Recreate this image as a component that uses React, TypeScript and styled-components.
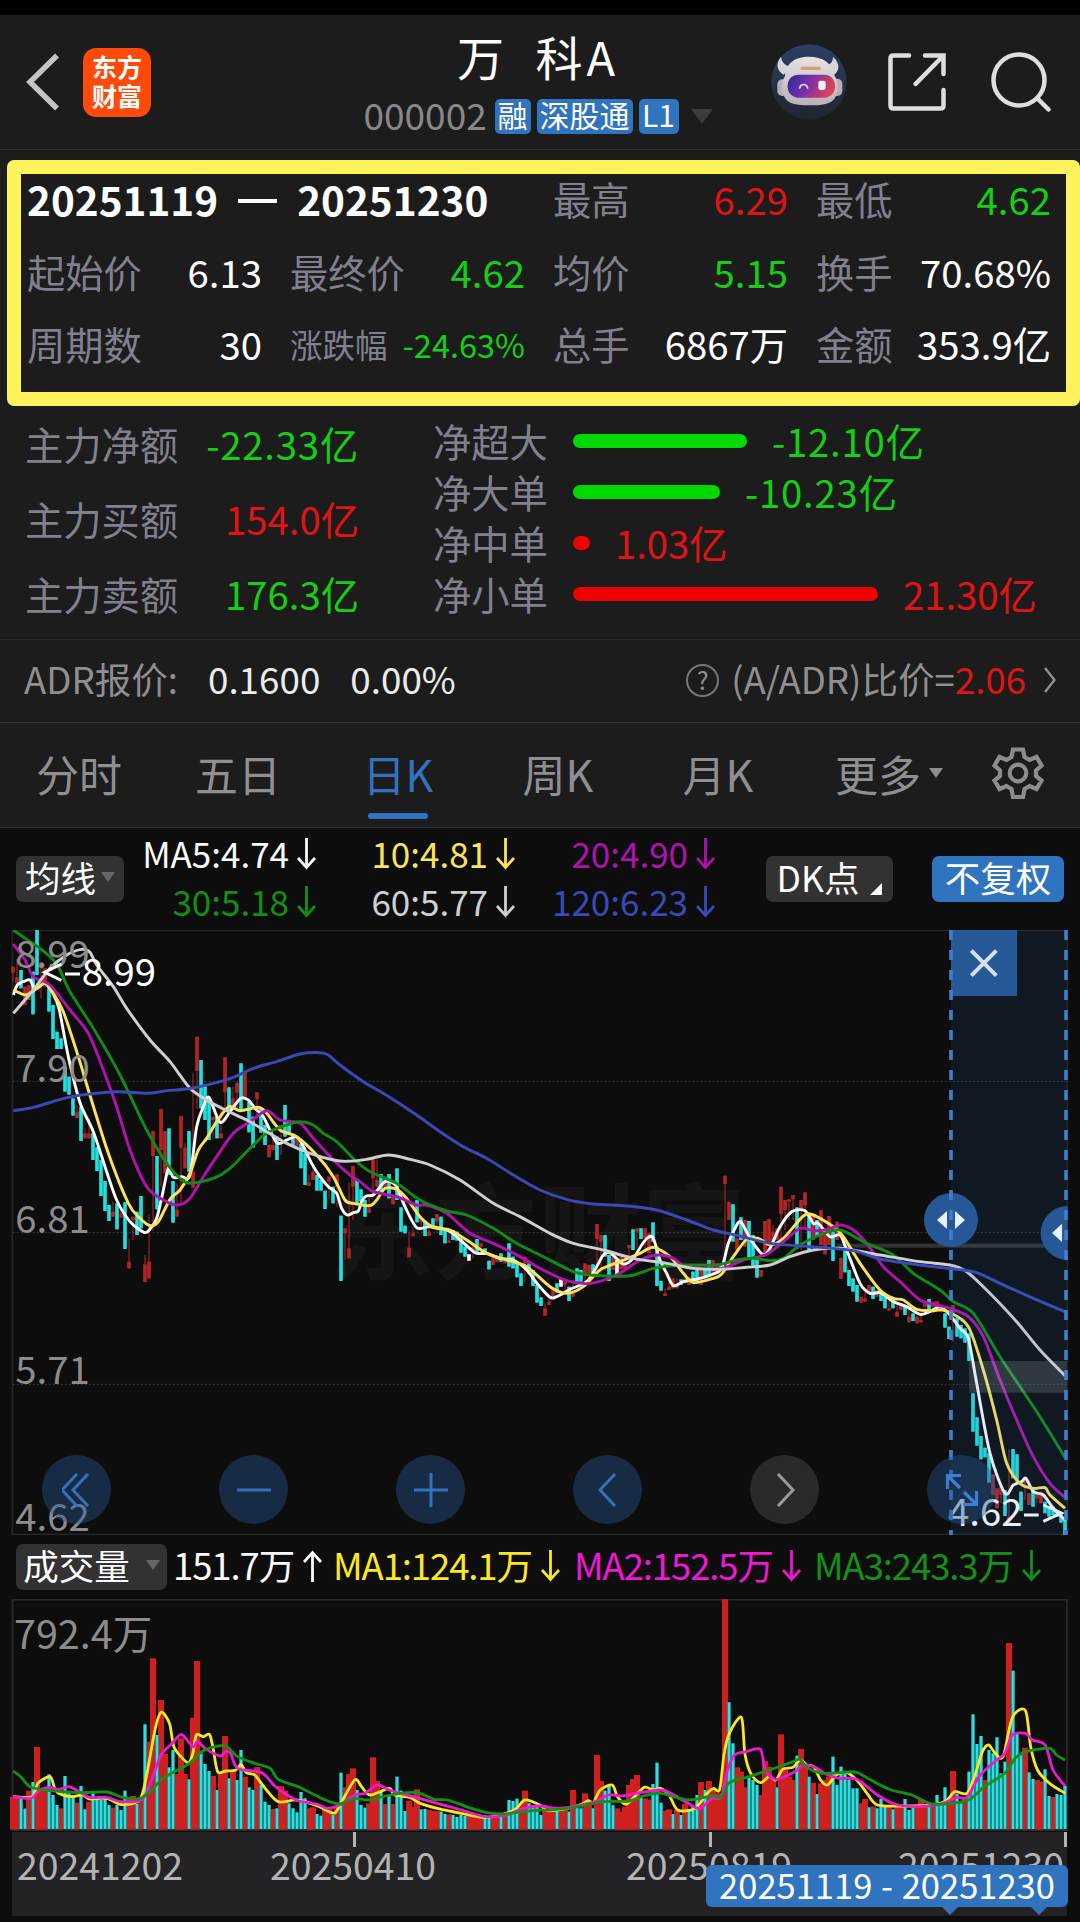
import styled, { createGlobalStyle } from 'styled-components';

const FONT = "'Noto Sans CJK SC', 'Noto Sans', sans-serif";

const COLORS = {
  up: '#e01414',
  down: '#14cf14',
  white: '#fdfdfd',
  muted: '#8f8f91',
  blue: '#3073be',
};

const GlobalStyle = createGlobalStyle`
  * {
    box-sizing: border-box;
  }

  body {
    margin: 0;
    background: #0d0d0d;
    font-family: ${FONT};
    color: ${COLORS.white};
  }

  svg {
    display: block;
    flex: none;
  }
`;

type Tone = 'up' | 'down' | 'white';

const Screen = styled.div`
  width: 1080px;
  height: 1922px;
  overflow: hidden;
  background: #0d0d0d;
  white-space: nowrap;
`;

/* header */

const StatusStrip = styled.div`
  height: 15px;
  background: #000;
`;

const Header = styled.header`
  display: grid;
  grid-template-columns: 364px 348px 1fr;
  height: 135px;
  background: #1c1c1c;
  border-bottom: 1px solid #333;
`;

const HeaderLeft = styled.div`
  display: flex;
  align-items: center;
  gap: 23px;
  padding: 0 0 0 26px;
`;

const BrandLogo = styled.div`
  display: flex;
  flex-direction: column;
  align-items: center;
  justify-content: center;
  width: 68px;
  height: 69px;
  padding-bottom: 2px;
  border-radius: 13px;
  background: #ff4a08;
  font-size: 25px;
  font-weight: 700;
  line-height: 29px;
`;

const HeaderCenter = styled.div`
  display: flex;
  flex-direction: column;
  align-items: center;
`;

const StockName = styled.h1`
  margin: 14px 0 0;
  font-size: 47px;
  font-weight: 400;
  line-height: 54px;
  letter-spacing: 4px;
  word-spacing: 13px;
`;

const StockMeta = styled.div`
  display: flex;
  align-items: center;
  gap: 6px;
  margin-top: 15px;
  height: 36px;
`;

const StockCode = styled.span`
  width: 125px;
  padding-bottom: 4px;
  font-size: 37px;
  color: #88888a;
`;

const Tag = styled.span<{ $width: number }>`
  width: ${({ $width }) => $width}px;
  height: 35px;
  border-radius: 5px;
  background: ${COLORS.blue};
  font-size: 30px;
  line-height: 31px;
  text-align: center;
`;

const Caret = styled.i<{ $size: number; $color: string }>`
  flex: none;
  border: ${({ $size }) => $size}px solid transparent;
  border-top: ${({ $size }) => $size * 1.45}px solid ${({ $color }) => $color};
  border-bottom: 0;
`;

const HeaderRight = styled.div`
  display: flex;
  align-items: center;
  justify-content: flex-end;
  padding-right: 29px;
`;

/* period statistics */

const PeriodPanel = styled.section`
  padding: 10px 0 0 7px;
  background: #1c1c1c;
`;

const PeriodFrame = styled.div`
  display: grid;
  grid-template-columns: repeat(4, 235px);
  grid-template-rows: repeat(3, 49px);
  gap: 23.5px 28px;
  height: 246px;
  padding-left: 6px;
  border: 14px solid #fff35c;
  border-radius: 7px;
`;

const PeriodRange = styled.div`
  display: flex;
  align-items: center;
  grid-column: span 2;
  font-size: 40.5px;
  font-weight: 700;
`;

const RangeDash = styled.i`
  width: 39px;
  height: 4px;
  margin: 4px 20px 0;
  background: #fff;
`;

const Cell = styled.div<{ $small?: boolean }>`
  display: flex;
  align-items: center;
  justify-content: space-between;
  font-size: ${({ $small }) => ($small ? 32.5 : 38.3)}px;
`;

const Label = styled.span`
  color: #81808f;
`;

const Value = styled.span<{ $tone: Tone; $loose?: boolean }>`
  color: ${({ $tone }) => COLORS[$tone]};
  letter-spacing: ${({ $loose }) => ($loose ? '0.8px' : 'normal')};
`;

/* money flow */

const FlowPanel = styled.section`
  display: grid;
  grid-template-columns: 334px 1fr;
  column-gap: 74px;
  height: 234px;
  padding-left: 25px;
  background: #1c1c1c;
  border-bottom: 1px solid #292929;
`;

const FlowTotals = styled.div`
  display: grid;
  grid-template-rows: repeat(3, 75px);
`;

const FlowDetails = styled.div`
  display: grid;
  grid-template-rows: repeat(4, 51px);
  padding-top: 9px;
`;

const FlowRow = styled.div`
  display: flex;
  align-items: center;
  font-size: 38.3px;
`;

const FlowBar = styled.i<{ $tone: Tone }>`
  height: 14px;
  margin: 1px 25px 0 25px;
  border-radius: 7px;
  background: ${({ $tone }) => ($tone === 'up' ? '#f00000' : '#00d900')};
`;

/* adr */

const AdrRow = styled.section`
  display: flex;
  align-items: center;
  height: 83px;
  padding: 0 24px 6px 24px;
  background: #1c1c1c;
  border-bottom: 1px solid #343434;
  font-size: 36.6px;
  color: ${COLORS.muted};
`;

const AdrValue = styled.span`
  margin-left: 30px;
  font-size: 36.8px;
  color: #ececec;
`;

const AdrRatio = styled.div`
  display: flex;
  align-items: center;
  margin-left: auto;
`;

const HelpMark = styled.span`
  width: 33px;
  height: 33px;
  margin: 4px 12px 0 0;
  border: 2.5px solid #777;
  border-radius: 50%;
  font-size: 25px;
  line-height: 27px;
  text-align: center;
`;

/* tabs */

const Tabs = styled.nav`
  display: grid;
  grid-template-columns: 158px repeat(4, 160px) 182px 76px;
  height: 105px;
  background: #1c1c1c;
  border-bottom: 1px solid #333;
`;

const Tab = styled.div<{ $active?: boolean }>`
  position: relative;
  display: flex;
  align-items: center;
  justify-content: center;
  gap: 8px;
  padding-bottom: 4px;
  font-size: 43px;
  color: ${({ $active }) => ($active ? COLORS.blue : COLORS.muted)};

  &::after {
    content: '';
    position: absolute;
    bottom: 8px;
    width: 60px;
    height: 6px;
    border-radius: 3px;
    background: ${({ $active }) => ($active ? COLORS.blue : 'transparent')};
  }
`;

/* indicators */

const IndicatorBar = styled.div`
  display: flex;
  align-items: center;
  height: 102px;
  padding: 0 16px 0 16px;
`;

const Chip = styled.div<{ $width: number; $primary?: boolean }>`
  display: flex;
  align-items: center;
  justify-content: center;
  gap: 5px;
  width: ${({ $width }) => $width}px;
  height: 46px;
  padding-bottom: 4px;
  border-radius: 7px;
  background: ${({ $primary }) => ($primary ? COLORS.blue : '#323232')};
  font-size: 35.5px;
  line-height: 42px;
`;

const Corner = styled.i`
  align-self: flex-end;
  margin: 0 0 3px 6px;
  border: 6px solid #fff;
  border-top-color: transparent;
  border-left-color: transparent;
`;

const Averages = styled.div`
  display: grid;
  grid-template-columns: 192px 199px 200px;
  grid-template-rows: 48px 48px;
  margin: 0 51px 5px 0;
`;

const Reading = styled.div<{ $color: string }>`
  display: flex;
  align-items: center;
  justify-content: flex-end;
  gap: 8px;
  font-size: 35px;
  color: ${({ $color }) => $color};

  svg {
    margin-top: 3px;
  }
`;

/* charts */

const PriceArea = styled.div`
  position: relative;
  height: 605px;
`;

const Controls = styled.div`
  position: absolute;
  top: 525px;
  left: 42px;
  display: flex;
  gap: 108px;
`;

const ControlButton = styled.div<{ $disabled?: boolean }>`
  display: flex;
  align-items: center;
  justify-content: center;
  width: 69px;
  height: 69px;
  border-radius: 50%;
  background: ${({ $disabled }) => ($disabled ? '#2a2a2a' : 'rgba(38, 86, 146, 0.42)')};
`;

const VolumeBar = styled.div`
  display: grid;
  grid-template-columns: 157px 160px 241px 240px 1fr;
  align-items: center;
  height: 64px;
  padding-left: 16px;
`;

const VolumeReading = styled(Reading)`
  justify-content: flex-start;
  gap: 9px;
  padding-bottom: 5px;
  font-size: 36.5px;
  letter-spacing: -1.1px;
`;

const AxisArea = styled.div`
  position: relative;
  height: 84px;
  margin: 0 13px 0 12px;
  background: #232325;
`;

const AxisDates = styled.div`
  display: grid;
  grid-template-columns: 253px 356px 272px 1fr;
  padding: 10px 0 0 5px;
  font-size: 37.4px;
  line-height: 44px;
  color: #b4b4b4;
`;

const AxisTick = styled.i<{ $x: number }>`
  position: absolute;
  top: 0;
  left: ${({ $x }) => $x}px;
  width: 3px;
  height: 15px;
  background: #b4b4b4;
`;

const RangeBadge = styled.div`
  position: absolute;
  top: 33px;
  right: -1px;
  width: 362px;
  height: 42px;
  border-radius: 6px;
  background: ${COLORS.blue};
  font-size: 34.5px;
  line-height: 38px;
  text-align: center;
  word-spacing: 1px;
`;

const BadgePointer = styled.i<{ $x: number }>`
  position: absolute;
  top: 41px;
  left: ${({ $x }) => $x}px;
  border: 9px solid transparent;
  border-top-color: ${COLORS.blue};
  border-bottom: 0;
`;

/* Each candle: colour (r/c/w), body top-bottom, optional ~wick top-bottom. */
const CANDLES = `
r140-158~140-185 r172-190~118-190 c150-205 r200-255 r195-240 c155-283 c30-165 r127-145~127-235 r145-200 c200-275
c255-357 c335-387 c355-387 c440-515 c470-524 c535-587 r575-595~555-595 c560-663 r640-655~625-655 r640-655~598-655
c640-720 c681-753 c720-828 c783-873 c855-903 r875-890~845-890 c850-928 r880-893~865-893 c847-987 r1025-1045~955-1045
r890-900~890-960 c875-945 c828-925 r1033-1086~1005-1086 r1025-1075~883-1075 r633-708~633-932 c708-868 r567-690~567-800 r633-760 c625-765
c783-908 r870-890~790-890 r588-683~588-855 r683-745~670-745 c633-755 r755-803~458-803 r350-453~350-567 c420-565 c498-600 c540-660
r590-600~590-657 c590-655 r640-655~555-655 r412-517~412-570 c502-575 r535-560~500-570 r488-518~488-570 c430-570 r458-530 c545-637
c590-683 r517-537~517-600 c565-638 c615-675 r675-712~672-712 r675-690~645-690 c650-720 r615-625~615-705 c555-650 c600-640
c645-678 r650-680 c672-745 c700-795 r787-798~763-798 r755-780~735-780 c765-812 c780-812 c812-867 r770-785~770-838
c800-850 r763-800~763-860 c887-1083 r925-940~925-1020 r985-1015~788-1015 r738-800~738-900 c780-850 c808-845 c840-890 r865-878~825-878
r718-775~718-830 r780-800~718-800 c762-815 r770-800 c762-835 r830-853 c745-840 c862-935 c917-940 r983-1012~935-1012
r940-948~925-948 c840-907 r895-905~895-925 c905-948 r935-948~915-948 c895-925 r882-905~882-935 c890-945 c925-970 r962-968~930-968
c930-960 c935-962 c955-998 c980-1010 w1003-1022 r980-990~980-1015 c957-1000 r970-980~970-1000 c985-1005 c1022-1048
r1015-1035~1005-1035 r1010-1025 c1000-1025 r1015-1030 c970-1040 c1010-1045 c1030-1072 c1060-1098 r1010-1030~1010-1085 c1030-1060
c1050-1098 c1095-1148 c1132-1158 r1165-1187~1150-1187 r1145-1155~1120-1155 r1110-1130 c1090-1118 w1075-1100 r1085-1095~1085-1120 c1100-1143
r1120-1130~1080-1130 c1045-1090 c1050-1085 r1030-1060~1030-1095 r1035-1060 c1033-1070 r912-957~912-1050 r945-965~945-1060 c945-1010 c1005-1083
r1010-1050 w1020-1065 r1010-1048 r1035-1048~1015-1048 r975-985~975-1040 c928-990 r925-935~925-985 c925-957 r925-955~925-985 r940-1000
c907-965 c980-1098 c1083-1112 r1120-1128~1105-1128 r1100-1110~1085-1110 r1075-1105 r1095-1105~1075-1105 c1078-1095 r1075-1090 r1070-1095
c1055-1085 c1040-1085 r1050-1095 c1045-1075 c1020-1065 r1020-1060 r1030-1055 c1035-1050 r767-792~767-1060 r845-900
c853-965 r955-990 c892-960 r900-980 c903-1015 c945-1040 c1010-1073 r1050-1070 r903-1000 r897-965
r935-970~915-970 r925-960 r800-882~800-960 r840-870~840-930 r838-845~838-900 r825-838~825-900 c862-985 r840-865~840-990 r817-857~817-930 c880-990
r885-960 c900-950 r870-975 r925-1003 r888-975 c935-1023 r905-960 r1013-1077 c985-1057 c1050-1098
c1075-1115 c1095-1145 r1130-1148 r1135-1145~1115-1145 r1095-1120 c1100-1137 r1110-1130 c1120-1143 c1130-1165 r1165-1172~1135-1172
c1140-1165 r1175-1190~1155-1190 r1150-1170 c1155-1185 r1190-1207~1170-1207 c1180-1203 r1190-1210 r1200-1207~1175-1207 r1150-1160~1150-1180 c1137-1170
r1145-1160~1145-1180 r1143-1170 r1155-1175 c1180-1223 c1220-1257 r1155-1180~1155-1265 c1195-1250 c1215-1255 c1225-1268 c1240-1323
c1420-1535 c1492-1577 c1548-1618 c1583-1612 c1600-1688 r1663-1725 r1705-1765 r1700-1725~1700-1750 c1710-1788 r1790-1812~1587-1812
c1587-1675 c1603-1685 c1715-1773 r1673-1690~1673-1740 r1720-1755 c1710-1760 r1720-1735~1720-1750 r1715-1750 c1745-1780 c1765-1790
c1760-1785 c1770-1790 c1780-1808 c1800-1845
`;

const AVERAGE_LINES = [
  {
    color: '#fafafa',
    points:
      '40,225 52,195 75,183 90,180 103,205 115,203 135,190 160,222 178,270 205,410 240,548 280,635 320,755 350,840 390,905 432,937 448,930 470,895 488,820 505,745 520,772 545,770 570,765 590,620 610,560 627,532 660,607 690,575 722,535 745,540 765,565 790,590 830,668 860,660 888,650 905,670 935,730 960,770 985,800 1010,820 1025,865 1042,885 1060,878 1075,873 1085,845 1098,828 1120,825 1140,800 1155,785 1172,785 1190,800 1215,860 1250,923 1290,920 1340,930 1370,950 1425,998 1460,1000 1500,1015 1540,1020 1580,1050 1615,1095 1650,1132 1670,1130 1710,1108 1760,1085 1790,1040 1810,1005 1830,998 1870,1032 1900,1015 1925,975 1945,952 1960,955 1980,1020 2000,1060 2020,1097 2050,1085 2100,1075 2140,1062 2165,1045 2185,970 2205,925 2222,905 2250,955 2275,990 2292,1005 2310,985 2340,920 2375,875 2415,872 2440,910 2455,910 2490,950 2520,945 2540,990 2580,1090 2610,1120 2640,1118 2680,1145 2720,1160 2760,1183 2790,1175 2820,1160 2850,1185 2880,1225 2905,1255 2930,1390 2970,1600 3015,1720 3040,1695 3065,1685 3078,1675 3100,1715 3130,1725 3160,1765 3195,1800',
  },
  {
    color: '#fbe45a',
    points:
      '40,210 75,225 100,213 135,190 160,220 190,275 235,410 265,510 325,700 385,850 420,895 450,917 475,905 510,838 540,810 570,760 595,690 620,655 650,605 687,560 720,572 775,562 800,580 840,630 890,650 950,705 1000,770 1035,840 1060,850 1110,857 1130,840 1155,805 1190,808 1220,835 1260,890 1300,922 1350,930 1400,960 1460,1000 1520,1020 1580,1040 1650,1100 1700,1120 1750,1100 1800,1050 1860,1025 1920,1000 1960,982 2010,1010 2050,1060 2080,1088 2140,1075 2165,1062 2200,1010 2240,958 2275,955 2310,975 2350,955 2410,888 2440,885 2500,920 2530,950 2580,1030 2640,1110 2680,1135 2710,1140 2750,1168 2800,1172 2830,1170 2880,1195 2910,1230 2950,1350 2990,1500 3020,1630 3060,1690 3100,1705 3135,1703 3150,1725 3195,1765',
  },
  {
    color: '#b012ae',
    points:
      '40,72 75,120 100,170 150,195 210,270 265,340 310,450 350,560 390,690 440,800 490,840 535,855 570,835 610,770 650,710 700,640 750,605 800,572 840,600 900,610 940,655 1000,720 1050,765 1080,785 1120,815 1190,830 1250,855 1280,855 1340,880 1410,940 1480,970 1560,1010 1620,1045 1700,1082 1770,1090 1850,1065 1920,1020 1975,1005 2020,1015 2060,1040 2165,1045 2230,1020 2300,1003 2350,965 2400,925 2440,932 2485,928 2520,915 2560,930 2600,970 2650,1040 2700,1085 2760,1140 2810,1155 2850,1165 2905,1190 2950,1250 3000,1380 3050,1500 3100,1610 3150,1690 3195,1732',
  },
  {
    color: '#128a16',
    points:
      '40,30 80,58 120,85 160,120 180,150 210,215 280,325 360,465 440,630 500,730 540,775 570,790 640,775 690,745 750,685 800,640 860,615 900,605 940,615 970,640 1010,665 1070,725 1110,755 1190,790 1260,840 1340,873 1400,885 1480,925 1550,970 1620,1005 1720,1055 1770,1065 1890,1067 1960,1045 2050,1035 2150,1035 2210,1020 2260,1015 2310,1022 2350,1015 2400,975 2460,945 2520,930 2600,970 2680,1005 2740,1060 2820,1110 2860,1145 2920,1180 3000,1310 3060,1400 3120,1490 3195,1612',
  },
  {
    color: '#cfcfd2',
    points:
      '40,280 100,210 150,145 200,105 245,88 270,97 290,135 340,200 380,265 450,360 510,425 570,505 620,540 680,572 740,600 800,635 860,670 930,700 1000,720 1040,724 1100,718 1165,705 1230,718 1290,735 1380,780 1480,850 1560,890 1650,940 1720,970 1810,990 1900,1015 2000,1030 2080,1045 2165,1048 2240,1042 2310,1035 2370,1010 2440,990 2520,985 2640,1005 2760,1025 2850,1035 2900,1055 2960,1110 3050,1205 3120,1290 3195,1367',
  },
  {
    color: '#3a49b8',
    points:
      '40,572 100,562 200,533 260,523 350,515 440,520 500,512 560,507 640,490 700,472 760,445 830,425 900,402 960,398 985,405 1020,435 1090,485 1150,520 1250,585 1320,635 1390,680 1460,715 1540,765 1620,810 1700,838 1780,852 1880,858 1970,870 2060,900 2140,930 2220,948 2310,970 2460,982 2560,992 2640,1017 2760,1035 2870,1048 2930,1058 3000,1090 3100,1135 3195,1175',
  },
];

const VOLUMES = `
r650 r655 c655 c686 r632 c606 r501 r632 r632 c583 c645 c675 r685 c588 c640 c645 r668 c618 c688 r665
c635 c655 c660 c655 c675 r683 c675 c690 c632 r655 r648 c672 r660 c433 r485 r235 c465 r360 r522 c562
c510 r582 r475 r582 c598 r413 r243 c520 c552 c573 r588 c630 r575 r468 c595 r572 c600 c510 r590 c622
c630 r561 c615 c665 c675 r687 c685 r618 r632 c670 c685 c697 c636 c655 r685 r682 c702 c707 r690 r688
c705 r680 c578 r622 r582 r565 c630 c675 c683 r670 r532 r603 c635 r672 c645 r672 c590 c632 c693 r662
r680 r628 c688 c687 r690 r692 r693 c695 c702 r703 c705 c711 c705 c708 r708 r710 r711 r712 c705 c708
r708 r706 c708 r700 c660 c663 c656 r675 r632 c670 c680 c678 c705 r690 r685 r685 c690 r680 r680 c695
r630 c683 c685 r640 r660 c685 r525 r603 c632 c618 c676 r685 r695 r680 r615 r597 r585 c650 r655 r659
c612 c548 c668 r692 r688 c702 r690 c705 r672 c690 c680 c645 r606 c630 r603 r625 r640 r640 r58 c367
c490 r562 r575 r622 c590 c600 c615 r645 r543 r560 r600 c622 r463 r570 r590 r600 c527 r507 r560 c590
r608 c642 r610 r600 r590 c530 c615 c560 c580 c600 c625 c625 r670 r657 c682 r680 c685 c657 c675 r680
c688 r680 r680 c657 c690 c680 r675 r657 r680 c680 r672 c645 c668 c622 r662 r573 c642 c663 r655 c575
c403 c492 c468 r600 c510 c520 c472 c580 c545 r189 c272 c458 c520 r503 c577 c597 r600 r605 c568 c648
r651 c642 c645 c618
`;

const VOLUME_LINES = [
  {
    color: '#fbe81f',
    points:
      '38,650 95,650 110,610 145,590 158,622 170,640 205,650 240,645 260,657 310,655 355,674 405,660 425,590 450,450 468,397 492,430 505,500 530,535 548,548 560,520 570,465 590,470 608,463 618,500 632,575 655,573 685,570 700,553 715,578 740,585 770,625 808,665 860,660 915,675 960,697 975,697 990,670 1030,600 1050,620 1075,645 1130,625 1145,645 1190,652 1220,670 1270,685 1340,700 1410,712 1470,700 1500,685 1525,660 1568,675 1590,692 1650,685 1690,672 1708,662 1723,668 1743,630 1778,615 1793,650 1818,673 1843,650 1871,622 1898,630 1918,625 1943,645 1968,690 2018,685 2058,635 2073,625 2090,628 2103,520 2118,460 2153,412 2163,520 2180,580 2208,608 2233,590 2253,600 2273,568 2303,562 2323,540 2343,555 2363,560 2383,600 2403,615 2428,585 2458,577 2488,600 2518,640 2548,675 2628,678 2708,675 2748,662 2773,635 2808,640 2833,580 2853,515 2871,495 2888,517 2913,530 2940,412 2978,392 2993,500 3013,570 3048,610 3093,640',
  },
  {
    color: '#ee18d4',
    points:
      '38,650 90,655 115,630 145,622 170,628 200,620 225,632 260,652 310,652 350,665 405,662 425,640 440,600 468,525 500,490 527,463 560,500 573,485 600,508 640,528 655,515 670,520 690,565 760,578 800,620 860,660 920,672 950,685 985,675 1030,645 1060,640 1095,615 1130,630 1160,640 1200,650 1270,670 1340,690 1410,710 1470,705 1520,685 1568,678 1628,685 1718,668 1768,645 1808,648 1848,640 1918,630 1948,640 1998,670 2033,685 2068,655 2093,652 2113,570 2133,525 2168,515 2208,508 2223,570 2253,598 2308,575 2333,555 2368,562 2398,582 2438,595 2488,598 2548,645 2598,672 2668,680 2738,670 2778,652 2808,652 2843,590 2888,545 2918,520 2940,465 2978,460 2998,480 3035,495 3058,570 3093,618',
  },
  {
    color: '#149018',
    points:
      '38,573 60,590 90,622 150,632 230,638 310,636 355,652 405,656 440,630 470,598 510,573 550,550 590,512 640,497 660,500 690,530 740,550 785,565 808,598 870,622 940,658 985,672 1030,655 1070,660 1120,648 1180,638 1220,640 1260,658 1300,660 1360,682 1410,697 1460,702 1520,695 1568,690 1598,690 1668,682 1748,665 1828,663 1868,648 1918,640 1998,660 2068,648 2093,652 2118,608 2168,592 2248,565 2303,545 2323,538 2343,562 2388,580 2448,577 2488,577 2538,605 2588,630 2648,645 2708,672 2808,662 2858,620 2918,580 2948,535 2978,515 3048,505 3068,525 3093,540',
  },
];

const PERIOD_CELLS: { label: string; value: string; tone: Tone; small?: boolean }[] = [
  { label: '最高', value: '6.29', tone: 'up' },
  { label: '最低', value: '4.62', tone: 'down' },
  { label: '起始价', value: '6.13', tone: 'white' },
  { label: '最终价', value: '4.62', tone: 'down' },
  { label: '均价', value: '5.15', tone: 'down' },
  { label: '换手', value: '70.68%', tone: 'white' },
  { label: '周期数', value: '30', tone: 'white' },
  { label: '涨跌幅', value: '-24.63%', tone: 'down', small: true },
  { label: '总手', value: '6867万', tone: 'white' },
  { label: '金额', value: '353.9亿', tone: 'white' },
];

const FLOW_TOTALS: { label: string; value: string; tone: Tone; loose?: boolean }[] = [
  { label: '主力净额', value: '-22.33亿', tone: 'down', loose: true },
  { label: '主力买额', value: '154.0亿', tone: 'up' },
  { label: '主力卖额', value: '176.3亿', tone: 'down' },
];

const FLOW_DETAILS: { label: string; value: string; width: number; tone: Tone; loose?: boolean }[] = [
  { label: '净超大', value: '-12.10亿', width: 174, tone: 'down', loose: true },
  { label: '净大单', value: '-10.23亿', width: 147, tone: 'down', loose: true },
  { label: '净中单', value: '1.03亿', width: 17, tone: 'up' },
  { label: '净小单', value: '21.30亿', width: 305, tone: 'up' },
];

const AVERAGES = [
  { text: 'MA5:4.74', color: '#fafafa' },
  { text: '10:4.81', color: '#fbe45a' },
  { text: '20:4.90', color: '#b012ae' },
  { text: '30:5.18', color: '#128f16' },
  { text: '60:5.77', color: '#cfcfd2' },
  { text: '120:6.23', color: '#3a49b8' },
];

const CANDLE_COLORS: Record<string, string> = { r: '#b52424', c: '#22dede', w: '#fff' };

type Point = { x: number; y: number };

const toPath = (points: string, scaleX = 1, scaleY = 1) => {
  const list: Point[] = points.split(' ').map((pair) => {
    const [x, y] = pair.split(',').map(Number);
    return { x: x / scaleX, y: y / scaleY };
  });

  return list.reduce((path, point, index) => {
    if (index === 0) {
      return `M${point.x} ${point.y}`;
    }
    const previous = list[index - 1];
    const before = list[index - 2] ?? previous;
    const after = list[index + 1] ?? point;
    const k = 7;
    return `${path}C${previous.x + (point.x - before.x) / k} ${previous.y + (point.y - before.y) / k} ${point.x - (after.x - previous.x) / k} ${point.y - (after.y - previous.y) / k} ${point.x} ${point.y}`;
  }, '');
};

const Arrow = ({ up }: { up?: boolean }) => (
  <svg width="19" height="32" viewBox="0 0 19 32" fill="none" stroke="currentColor" strokeWidth="2.8">
    <path d={up ? 'M9.5 32V3M1 12L9.5 2.5L18 12' : 'M9.5 0V29M1 20L9.5 29.5L18 20'} />
  </svg>
);

const RobotIcon = () => (
  <svg width="76" height="76" viewBox="0 0 228 228">
    <defs>
      <linearGradient id="robotBack" x1="0" y1="0" x2="0" y2="1">
        <stop offset="0" stopColor="#2c4064" />
        <stop offset="1" stopColor="#20242f" />
      </linearGradient>
      <linearGradient id="robotFace" x1="0" y1="0" x2="1" y2="0.25">
        <stop offset="0" stopColor="#2b2aa0" />
        <stop offset="0.5" stopColor="#7a2fa8" />
        <stop offset="1" stopColor="#d8425a" />
      </linearGradient>
      <linearGradient id="robotShell" x1="0" y1="0" x2="0" y2="1">
        <stop offset="0" stopColor="#e6e2e2" />
        <stop offset="1" stopColor="#b9b2b6" />
      </linearGradient>
    </defs>
    <circle cx="114" cy="114" r="113" fill="url(#robotBack)" />
    <path
      d="M30 38C14 58 16 78 38 92L60 68C40 64 33 54 30 38ZM186 38C208 58 206 78 190 92L160 66C180 62 186 52 186 38Z"
      fill="#d8d5d8"
    />
    <rect x="19" y="106" width="32" height="50" rx="15" fill="#b5afb6" />
    <rect x="182" y="104" width="32" height="52" rx="15" fill="#b5afb6" />
    <path
      d="M42 96C44 56 74 38 114 38C154 38 184 56 190 94C203 112 203 140 194 158C182 182 150 184 116 184C78 184 50 180 40 158C30 138 31 114 42 96Z"
      fill="url(#robotShell)"
    />
    <rect x="50" y="92" width="142" height="69" rx="32" fill="url(#robotFace)" />
    <path d="M86 132C90 118 106 118 110 132" fill="none" stroke="#ded8fa" strokeWidth="5" strokeLinecap="round" />
    <rect x="142" y="110" width="22" height="28" rx="7" fill="#f3eefa" />
    <rect x="88" y="68" width="62" height="10" rx="5" fill="#d8a070" />
  </svg>
);

const GearIcon = () => (
  <svg width="54" height="54" viewBox="0 0 54 54" fill="none" stroke="#8d8d8f" strokeWidth="4.2">
    <path d="M22 3.5H32L33.5 11L38.5 14L45.5 11L50.5 19.5L45 24.5V30L50.5 34.5L45.5 43L38.5 40L33.5 43L32 51H22L20.5 43L15.5 40L8.5 43L3.5 34.5L9 30V24.5L3.5 19.5L8.5 11L15.5 14L20.5 11Z" />
    <circle cx="27" cy="27" r="8.3" />
  </svg>
);

const PriceChart = () => {
  const candles = CANDLES.trim().split(/\s+/);

  return (
    <svg width="1080" height="605" viewBox="0 30 3240 1815" fontFamily={FONT}>
      <path d="M37 1845V31H3202V1845M37 1843H3202" stroke="#252525" strokeWidth="5" fill="none" />
      <text x="990" y="1056" fontSize="312" fontWeight="700" fill="#151515">
        东方财富
      </text>
      <path d="M38 484H3202M38 938H3202M38 1393H3202" stroke="#3a3a3a" strokeWidth="3" strokeDasharray="6 6" />
      <rect x="2510" y="971" width="690" height="12" fill="#333" />
      {candles.map((candle, index) => {
        const x = 39 + index * 12;
        const [body, wick] = candle.slice(1).split('~');
        const [top, bottom] = body.split('-').map(Number);
        const [high, low] = (wick ?? body).split('-').map(Number);
        const color = CANDLE_COLORS[candle[0]];
        return (
          <g key={index} fill={color}>
            <rect x={x - 1.5} y={high} width="3" height={low - high} />
            <rect x={x - 5.5} y={top} width="11" height={bottom - top} />
          </g>
        );
      })}
      {AVERAGE_LINES.map(({ color, points }) => (
        <path key={color} d={toPath(points)} fill="none" stroke={color} strokeWidth="8.8" strokeLinejoin="round" />
      ))}
      <g fontSize="115" fill="#8c8c8c">
        <text x="46" y="143">8.99</text>
        <text x="46" y="486">7.90</text>
        <text x="46" y="938">6.81</text>
        <text x="46" y="1393">5.71</text>
        <text x="46" y="1833">4.62</text>
      </g>
      <g fontSize="115" fill="#fff">
        <text x="245" y="197">8.99</text>
        <text x="2844" y="1818">4.62</text>
      </g>
      <path
        d="M184 132L134 157L184 181M195 162H240M3072 1785H3116M3130 1755L3184 1779L3130 1804"
        fill="none"
        stroke="#fff"
        strokeWidth="9"
      />
      <rect x="2907" y="1323" width="293" height="95" fill="#fff" opacity="0.15" />
      <rect x="2853" y="30" width="348" height="1815" fill="#2f80d0" opacity="0.11" />
      <rect x="2853" y="30" width="198" height="198" fill="#275998" />
      <path d="M2914 92L2989 167M2989 92L2914 167" stroke="#d5e1f3" strokeWidth="12" />
      <g fill="#265797">
        <circle cx="2853" cy="900" r="81" />
        <path d="M3203 858A81 81 0 1 0 3203 1020Z" />
      </g>
      <path d="M2853 30V1845M3198 30V1845" stroke="#3f7ecb" strokeWidth="11" strokeDasharray="30 30" />
      <path d="M2841 873V927L2811 900ZM2865 873V927L2895 900ZM3186 911V966L3156 939Z" fill="#e8f1fc" />
    </svg>
  );
};

const VolumeChart = () => {
  const bars = VOLUMES.trim()
    .split(/\s+/)
    .map((bar, index) => ({
      color: bar[0],
      x: 13 + index * 4,
      y: Number(bar.slice(1)) / 3,
    }));
  const red = bars.filter(({ color }) => color === 'r');
  const cyan = bars.filter(({ color }) => color === 'c');

  return (
    <svg width="1080" height="233" viewBox="0 19 1080 233" fontFamily={FONT}>
      <path d="M12.5 250V19.5H1067V250Z" stroke="#2b2b2b" strokeWidth="1.8" fill="none" />
      <text x="14" y="69" fontSize="39.5" fill="#8c8c8c">
        792.4万
      </text>
      {red.map(({ x, y }) => (
        <rect key={x} x={x - 3} y={y} width="6" height={249.5 - y} fill="#cf1f1f" />
      ))}
      {cyan.map(({ x, y }) => (
        <rect key={x} x={x - 2} y={y} width="4" height={249.5 - y} fill="#173c3e" />
      ))}
      {cyan.map(({ x, y }) => (
        <rect key={x} x={x - 1.5} y={y} width="3" height={249 - y} fill="#2be0e0" />
      ))}
      {VOLUME_LINES.map(({ color, points }) => (
        <path
          key={color}
          d={toPath(points, 2.904, 3)}
          fill="none"
          stroke={color}
          strokeWidth="2.8"
          strokeLinejoin="round"
        />
      ))}
    </svg>
  );
};

const App = () => (
  <Screen>
    <GlobalStyle />
    <StatusStrip />
    <Header>
      <HeaderLeft>
        <svg width="34" height="58" viewBox="0 0 34 58" fill="none" stroke="#c4c4c4" strokeWidth="5.5">
          <path d="M31 2.5L4 29L31 55.5" />
        </svg>
        <BrandLogo>
          <span>东方</span>
          <span>财富</span>
        </BrandLogo>
      </HeaderLeft>
      <HeaderCenter>
        <StockName>万 科A</StockName>
        <StockMeta>
          <StockCode>000002</StockCode>
          <Tag $width={36}>融</Tag>
          <Tag $width={96}>深股通</Tag>
          <Tag $width={40}>L1</Tag>
          <Caret $size={11} $color="#3c3c3c" style={{ marginLeft: 6 }} />
        </StockMeta>
      </HeaderCenter>
      <HeaderRight>
        <RobotIcon />
        <svg
          width="60"
          height="60"
          viewBox="0 0 60 60"
          fill="none"
          stroke="#dedede"
          strokeWidth="4.5"
          strokeLinecap="round"
          style={{ marginLeft: 40 }}
        >
          <path d="M22 3.5H6.5Q3.5 3.5 3.5 6.5V53.5Q3.5 56.5 6.5 56.5H53.5Q56.5 56.5 56.5 53.5V38M38 3.5H56.5V22M56 4L28.5 32" />
        </svg>
        <svg
          width="60"
          height="60"
          viewBox="0 0 60 60"
          fill="none"
          stroke="#dedede"
          strokeWidth="4.5"
          strokeLinecap="round"
          style={{ marginLeft: 44 }}
        >
          <circle cx="28" cy="28" r="25.5" />
          <path d="M46.5 46.5L57.5 57.5" />
        </svg>
      </HeaderRight>
    </Header>

    <PeriodPanel>
      <PeriodFrame>
        <PeriodRange>
          20251119
          <RangeDash />
          20251230
        </PeriodRange>
        {PERIOD_CELLS.map(({ label, value, tone, small }) => (
          <Cell key={label} $small={small}>
            <Label>{label}</Label>
            <Value $tone={tone}>{value}</Value>
          </Cell>
        ))}
      </PeriodFrame>
    </PeriodPanel>

    <FlowPanel>
      <FlowTotals>
        {FLOW_TOTALS.map(({ label, value, tone, loose }) => (
          <Cell key={label}>
            <Label>{label}</Label>
            <Value $tone={tone} $loose={loose}>
              {value}
            </Value>
          </Cell>
        ))}
      </FlowTotals>
      <FlowDetails>
        {FLOW_DETAILS.map(({ label, value, width, tone, loose }) => (
          <FlowRow key={label}>
            <Label>{label}</Label>
            <FlowBar $tone={tone} style={{ width }} />
            <Value $tone={tone} $loose={loose}>
              {value}
            </Value>
          </FlowRow>
        ))}
      </FlowDetails>
    </FlowPanel>

    <AdrRow>
      <span>ADR报价:</span>
      <AdrValue>0.1600</AdrValue>
      <AdrValue>0.00%</AdrValue>
      <AdrRatio>
        <HelpMark>?</HelpMark>
        (A/ADR)比价=<Value $tone="up">2.06</Value>
        <svg
          width="12"
          height="26"
          viewBox="0 0 12 26"
          fill="none"
          stroke="#8f8f91"
          strokeWidth="2.5"
          style={{ margin: '4px 0 0 18px' }}
        >
          <path d="M1 1L10.5 13L1 25" />
        </svg>
      </AdrRatio>
    </AdrRow>

    <Tabs>
      <Tab>分时</Tab>
      <Tab>五日</Tab>
      <Tab $active>日K</Tab>
      <Tab>周K</Tab>
      <Tab>月K</Tab>
      <Tab>
        更多
        <Caret $size={7.5} $color="#8f8f91" />
      </Tab>
      <Tab>
        <GearIcon />
      </Tab>
    </Tabs>

    <IndicatorBar>
      <Chip $width={108}>
        均线
        <Caret $size={7} $color="#666" />
      </Chip>
      <Averages>
        {AVERAGES.map(({ text, color }) => (
          <Reading key={text} $color={color}>
            {text}
            <Arrow />
          </Reading>
        ))}
      </Averages>
      <Chip $width={127}>
        DK点
        <Corner />
      </Chip>
      <Chip $width={132} $primary style={{ marginLeft: 39 }}>
        不复权
      </Chip>
    </IndicatorBar>

    <PriceArea>
      <PriceChart />
      <Controls>
        <ControlButton>
          <svg width="30" height="34" viewBox="0 0 30 34" fill="none" stroke="#3272bd" strokeWidth="3">
            <path d="M15 1L0 17L15 33M26 1L11 17L26 33" />
          </svg>
        </ControlButton>
        <ControlButton>
          <svg width="34" height="34" viewBox="0 0 34 34" stroke="#3272bd" strokeWidth="3">
            <path d="M0 17H34" />
          </svg>
        </ControlButton>
        <ControlButton>
          <svg width="34" height="34" viewBox="0 0 34 34" stroke="#3272bd" strokeWidth="3">
            <path d="M0 17H34M17 0V34" />
          </svg>
        </ControlButton>
        <ControlButton>
          <svg width="20" height="34" viewBox="0 0 20 34" fill="none" stroke="#3272bd" strokeWidth="3">
            <path d="M17 1L2 17L17 33" />
          </svg>
        </ControlButton>
        <ControlButton $disabled>
          <svg width="20" height="34" viewBox="0 0 20 34" fill="none" stroke="#9a9a9a" strokeWidth="3">
            <path d="M3 1L18 17L3 33" />
          </svg>
        </ControlButton>
        <ControlButton>
          <svg width="36" height="36" viewBox="0 0 36 36" fill="none" stroke="#3a7fd2" strokeWidth="3.2">
            <path d="M3.5 17V3.5H17M4 4L16 16M32.5 19V32.5H19M32 32L20 20" />
          </svg>
        </ControlButton>
      </Controls>
    </PriceArea>

    <VolumeBar>
      <Chip $width={151}>
        成交量
        <Caret $size={7} $color="#666" style={{ marginLeft: 11 }} />
      </Chip>
      <VolumeReading $color="#fafafa">
        151.7万
        <Arrow up />
      </VolumeReading>
      <VolumeReading $color="#fbe81f">
        MA1:124.1万
        <Arrow />
      </VolumeReading>
      <VolumeReading $color="#ee18d4">
        MA2:152.5万
        <Arrow />
      </VolumeReading>
      <VolumeReading $color="#149018">
        MA3:243.3万
        <Arrow />
      </VolumeReading>
    </VolumeBar>

    <VolumeChart />

    <AxisArea>
      <AxisTick $x={341} />
      <AxisTick $x={697} />
      <AxisTick $x={1052} />
      <AxisDates>
        <span>20241202</span>
        <span>20250410</span>
        <span>20250819</span>
        <span>20251230</span>
      </AxisDates>
      <RangeBadge>
        20251119 - 20251230
        <BadgePointer $x={235} />
        <BadgePointer $x={324} />
      </RangeBadge>
    </AxisArea>
  </Screen>
);

export default App;
